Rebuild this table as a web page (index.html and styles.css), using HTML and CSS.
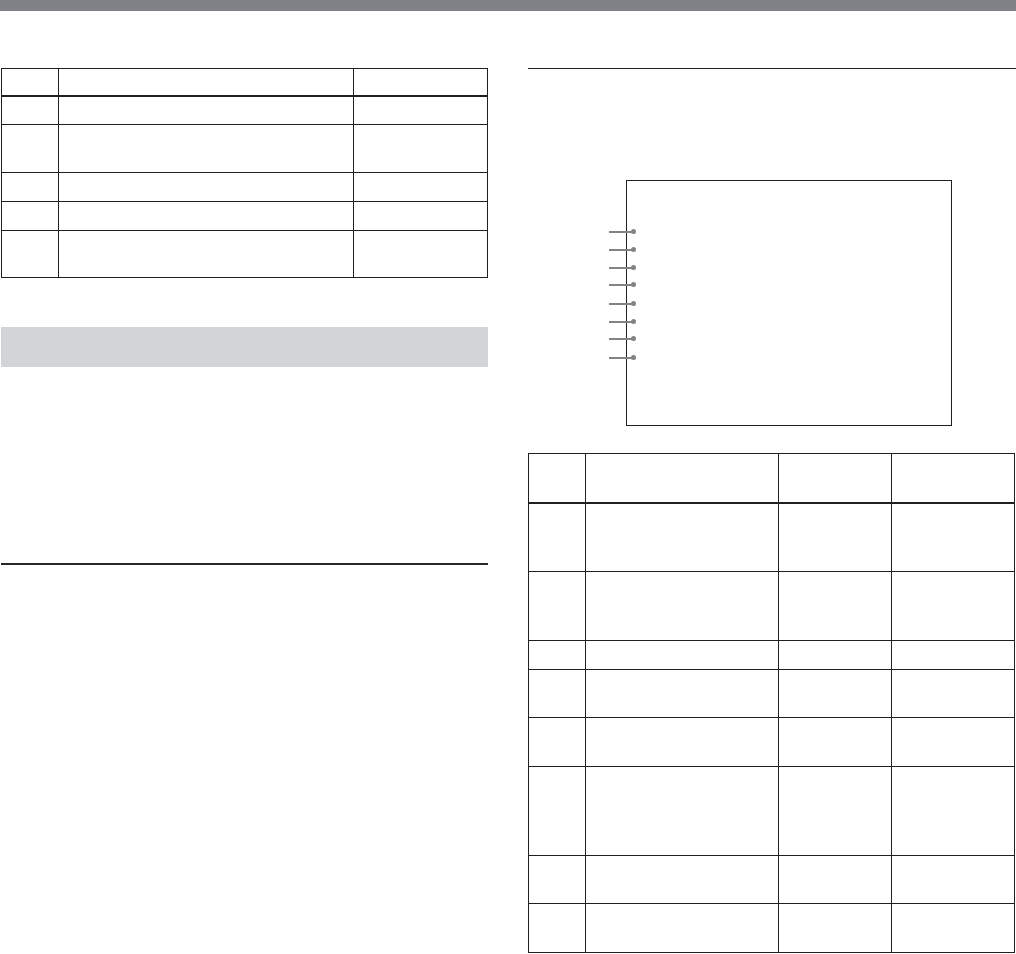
FILE: index.html
```html
<!DOCTYPE html>
<html lang="en">
<head>
<meta charset="utf-8">
<title>Page</title>
<link rel="stylesheet" href="styles.css">
</head>
<body>
<div class="topbar"></div>
<main class="page">
  <section class="col col-left">
    <div class="grid grid-left">
      <div class="cell head"></div><div class="cell head"></div><div class="cell head"></div>
      <div class="cell"></div><div class="cell"></div><div class="cell"></div>
      <div class="cell"></div><div class="cell"></div><div class="cell"></div>
      <div class="cell"></div><div class="cell"></div><div class="cell"></div>
      <div class="cell"></div><div class="cell"></div><div class="cell"></div>
      <div class="cell"></div><div class="cell"></div><div class="cell"></div>
    </div>
    <div class="band"></div>
    <div class="rule rule-left"></div>
  </section>
  <section class="col col-right">
    <div class="rule rule-right"></div>
    <div class="diagram">
      <span class="pin p1"></span>
      <span class="pin p2"></span>
      <span class="pin p3"></span>
      <span class="pin p4"></span>
      <span class="pin p5"></span>
      <span class="pin p6"></span>
      <span class="pin p7"></span>
      <span class="pin p8"></span>
    </div>
    <div class="grid grid-right">
      <div class="cell head"></div><div class="cell head"></div><div class="cell head"></div><div class="cell head"></div>
      <div class="cell"></div><div class="cell"></div><div class="cell"></div><div class="cell"></div>
      <div class="cell"></div><div class="cell"></div><div class="cell"></div><div class="cell"></div>
      <div class="cell"></div><div class="cell"></div><div class="cell"></div><div class="cell"></div>
      <div class="cell"></div><div class="cell"></div><div class="cell"></div><div class="cell"></div>
      <div class="cell"></div><div class="cell"></div><div class="cell"></div><div class="cell"></div>
      <div class="cell"></div><div class="cell"></div><div class="cell"></div><div class="cell"></div>
      <div class="cell"></div><div class="cell"></div><div class="cell"></div><div class="cell"></div>
      <div class="cell"></div><div class="cell"></div><div class="cell"></div><div class="cell"></div>
    </div>
  </section>
</main>
</body>
</html>
```
FILE: styles.css
```css
* { box-sizing: border-box; }

html, body {
  margin: 0;
  padding: 0;
  background: #ffffff;
  font-family: "Liberation Sans", Arial, sans-serif;
}

.topbar {
  height: 11px;
  background: #818287;
}

.page {
  display: grid;
  grid-template-columns: 487px 488px;
  column-gap: 40px;
  padding: 57px 0 0 1px;
}

.col {
  display: flex;
  flex-direction: column;
}

.grid {
  display: grid;
  border-top: 1px solid #231f20;
  border-left: 1px solid #231f20;
}

.cell {
  border-right: 1px solid #231f20;
  border-bottom: 1px solid #231f20;
}

.cell.head {
  border-bottom-width: 2px;
}

.grid-left {
  width: 487px;
  grid-template-columns: 57px 295px 134px;
  grid-template-rows: 28px 28px 48px 29px 29px 47px;
}

.band {
  margin-top: 49px;
  height: 40px;
  background: #d3d4d6;
}

.rule {
  border-top: 1px solid #231f20;
}

.rule-left {
  margin-top: 196px;
  width: 487px;
  border-top-width: 2px;
  border-top-color: #2a2627;
}

.rule-right {
  width: 488px;
}

.diagram {
  position: relative;
  margin-top: 111px;
  margin-left: 98px;
  width: 326px;
  height: 246px;
  border: 1px solid #231f20;
}

.pin {
  position: absolute;
  left: -18px;
  width: 24px;
  height: 2px;
  background: #828287;
}

.pin::after {
  content: "";
  position: absolute;
  right: -3px;
  top: -2px;
  width: 5px;
  height: 5px;
  border-radius: 50%;
  background: #828287;
}

.p1 { top: 50px; }
.p2 { top: 68px; }
.p3 { top: 86px; }
.p4 { top: 103px; }
.p5 { top: 122px; }
.p6 { top: 140px; }
.p7 { top: 157px; }
.p8 { top: 176px; }

.grid-right {
  margin-top: 27px;
  width: 487px;
  grid-template-columns: 57px 193px 113px 123px;
  grid-template-rows: 50px 68px 69px 29px 48px 49px 89px 48px 49px;
}
```
